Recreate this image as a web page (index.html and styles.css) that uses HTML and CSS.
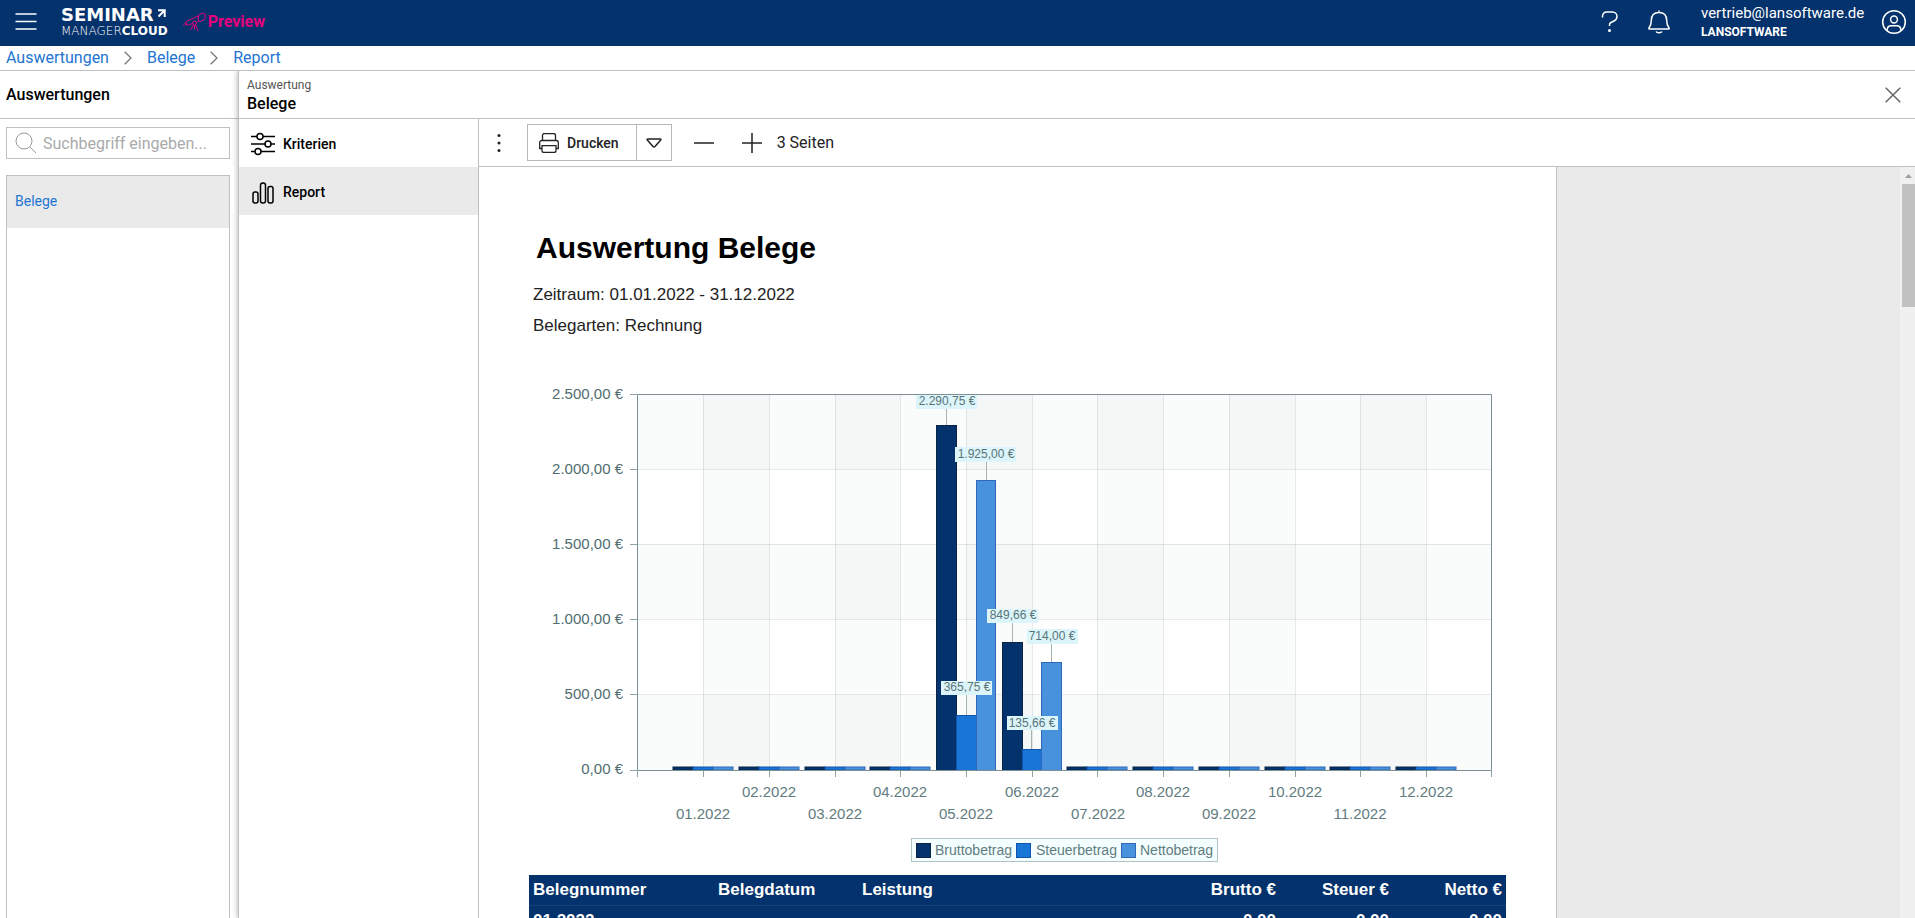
FILE: index.html
```html
<!DOCTYPE html>
<html lang="de">
<head>
<meta charset="utf-8">
<title>Auswertung Belege</title>
<link rel="stylesheet" href="styles.css">
</head>
<body>
<header class="topbar">
  <button class="icon-btn menu" aria-label="Menü"><svg width="22" height="20" viewBox="0 0 22 20"><path d="M0.500 2h21M0.500 9.500h21M0.500 17h21"/></svg></button>
  <div class="logo">
    <div class="logo-top">SEMINAR<svg width="9" height="9" viewBox="0 0 9 9"><path d="M1 1.300h6.700V8M7 2L1.500 7.500"/></svg></div>
    <div class="logo-bottom"><span>MANAGER</span><b>CLOUD</b></div>
  </div>
  <div class="preview">
    <svg width="23" height="20" viewBox="0 0 23 20"><path d="M15.500 3l4.500-2 1.700.6.500 4.600-1 1.600-4.400 1.800-1.600-1.200zM15.200 4L3.800 9.200l-.8 1.500 1.200 2.300 1.500.2 4-1.800M13.500 10.200l2.300-1.200M3 10.500l-1.200.8.700 1.500 1.500-.3M.5 12.500l.6 1.200M9.500 11.200a2 2 0 1 1 4 0 2 2 0 0 1-4 0M10.500 13l-3.200 5.200M12.500 13l2.500 6M11.500 13.200v4.300"/></svg>
    <span>Preview</span>
  </div>
  <div class="top-actions">
    <button class="icon-btn" aria-label="Hilfe"><svg width="18" height="24" viewBox="0 0 18 24"><path d="M1.500 7.500V6a4 4 0 0 1 4-4h6a4.500 4.500 0 0 1 4.500 4.500c0 2.500-1.300 3.800-3.500 4.800L10 12.500a2.600 2.600 0 0 0-1.500 2.500v1"/><circle class="dot" cx="8.500" cy="20.500" r="1.500"/></svg></button>
    <button class="icon-btn bell" aria-label="Benachrichtigungen"><svg width="22" height="24" viewBox="0 0 22 24"><path d="M11 .500v2M1.500 19h19c.8 0 .8-.8.400-1.300-1.700-2-2.200-3.600-2.200-7.200 0-5-3-8-7.700-8s-7.700 3-7.700 8c0 3.600-.5 5.200-2.200 7.200-.4.500-.4 1.300.4 1.300zM8 21.500c.8 1.600 5.200 1.600 6 0"/></svg></button>
    <div class="account"><span>vertrieb@lansoftware.de</span><b>LANSOFTWARE</b></div>
    <button class="icon-btn" aria-label="Profil"><svg width="26" height="26" viewBox="0 0 26 26"><circle cx="13" cy="13" r="11.300"/><circle cx="13" cy="10.500" r="3.400"/><path d="M6 21.500c.2-3.300 1.600-4.700 4.200-4.700h5.600c2.600 0 4 1.400 4.200 4.700"/></svg></button>
  </div>
</header>

<nav class="crumbs" aria-label="Brotkrumen">
  <a href="#">Auswertungen</a>
  <svg width="8" height="14" viewBox="0 0 8 14"><path d="M.7.700L7 7 .7 13.300"/></svg>
  <a href="#">Belege</a>
  <svg width="8" height="14" viewBox="0 0 8 14"><path d="M.7.700L7 7 .7 13.300"/></svg>
  <a href="#">Report</a>
</nav>

<main class="workspace">
  <aside class="sidebar">
    <h1 class="side-title">Auswertungen</h1>
    <div class="side-body">
      <label class="search">
        <svg width="22" height="22" viewBox="0 0 22 22"><circle cx="9" cy="9" r="8"/><path d="M15 15l6 6"/></svg>
        <input type="text" placeholder="Suchbegriff eingeben..." aria-label="Suchbegriff">
      </label>
      <div class="side-list"><a class="side-item" href="#">Belege</a></div>
    </div>
  </aside>

  <section class="detail">
    <div class="detail-head">
      <div><div class="kicker">Auswertung</div><h2>Belege</h2></div>
      <button class="icon-btn close" aria-label="Schließen"><svg width="16" height="16" viewBox="0 0 16 16"><path d="M.7.700l14.600 14.600M15.300.700L.7 15.300"/></svg></button>
    </div>
    <div class="detail-body">
      <nav class="tabs">
        <a class="tab" href="#"><svg width="24" height="24" viewBox="0 0 24 24"><path d="M0 4.500h6M12 4.500h12M0 12h14M20 12h4M0 19.500h4M10 19.500h14"/><circle cx="9" cy="4.500" r="3"/><circle cx="17" cy="12" r="3"/><circle cx="7" cy="19.500" r="3"/></svg>Kriterien</a>
        <a class="tab active" href="#"><svg width="24" height="24" viewBox="0 0 24 24"><rect x="2" y="12" width="5" height="11" rx="2"/><rect x="9.500" y="3" width="5" height="20" rx="2.300"/><rect x="17" y="6.500" width="5" height="16.500" rx="2"/></svg>Report</a>
      </nav>
      <div class="viewer">
        <div class="toolbar">
          <button class="icon-btn more" aria-label="Mehr"><svg width="4" height="20" viewBox="0 0 4 20"><circle cx="2" cy="2.500" r="1.500"/><circle cx="2" cy="10" r="1.500"/><circle cx="2" cy="17.500" r="1.500"/></svg></button>
          <div class="split">
            <button class="print"><svg width="20" height="20" viewBox="0 0 20 20"><path d="M3.500 7V2.500a2 2 0 0 1 2-2h9a2 2 0 0 1 2 2V7M3 15.500H.7v-6a2 2 0 0 1 2-2h14.600a2 2 0 0 1 2 2v6H17M3 12.700h14v4.800a2 2 0 0 1-2 2H5a2 2 0 0 1-2-2zM5 7.500h10"/></svg>Drucken</button>
            <button class="drop" aria-label="Druckoptionen"><svg width="16" height="10" viewBox="0 0 16 10"><path d="M1.800 1h12.400c.7 0 .9.500.5 1L9 8.500c-.5.600-1.500.600-2 0L1.300 2c-.4-.5-.2-1 .5-1z"/></svg></button>
          </div>
          <button class="icon-btn zoom" aria-label="Verkleinern"><svg width="20" height="20" viewBox="0 0 20 20"><path d="M0 10h20"/></svg></button>
          <button class="icon-btn zoom" aria-label="Vergrößern"><svg width="20" height="20" viewBox="0 0 20 20"><path d="M0 10h20M10 0v20"/></svg></button>
          <span class="pages">3 Seiten</span>
        </div>
        <div class="canvas">
          <article class="sheet">
            <h3>Auswertung Belege</h3>
            <p>Zeitraum: 01.01.2022 - 31.12.2022</p>
            <p>Belegarten: Rechnung</p>
            <svg class="chart" viewBox="0 0 977 490" role="img" aria-label="Beträge je Monat">
              <defs>
                <g id="zero">
                  <rect x="-30" y="393" width="20" height="3" class="b1"/><rect x="-10" y="393" width="20" height="3" class="b2"/><rect x="10" y="393" width="20" height="3" class="b3"/>
                </g>
              </defs>
              <g class="band">
                <path d="M109 20h854v75H109zM109 170h854v75H109zM109 321h854v75H109z"/>
                <path d="M174 20h66v376h-66zM306 20h65v376h-65zM437 20h66v376h-66zM568 20h66v376h-66zM700 20h66v376h-66zM831 20h66v376h-66z"/>
              </g>
              <path class="grid" d="M109 95.500h854M109 170.500h854M109 245.500h854M109 320.500h854M174.500 20v376M240.500 20v376M306.500 20v376M371.500 20v376M437.500 20v376M503.500 20v376M568.500 20v376M634.500 20v376M700.500 20v376M766.500 20v376M831.500 20v376M897.500 20v376"/>
              <path class="tick" d="M101 20.500h7M101 95.500h7M101 170.500h7M101 245.500h7M101 320.500h7M101 396.500h7M108.500 397v6M174.500 397v6M240.500 397v6M306.500 397v6M371.500 397v6M437.500 397v6M503.500 397v6M568.500 397v6M634.500 397v6M700.500 397v6M766.500 397v6M831.500 397v6M897.500 397v6M962.500 397v6"/>
              <use href="#zero" x="174"/><use href="#zero" x="240"/><use href="#zero" x="306"/><use href="#zero" x="371"/><use href="#zero" x="568"/><use href="#zero" x="634"/><use href="#zero" x="700"/><use href="#zero" x="766"/><use href="#zero" x="831"/><use href="#zero" x="897"/>
              <g>
                <rect class="b1" x="407.500" y="51.500" width="20" height="345"/><rect class="b2" x="427.500" y="341.500" width="20" height="55"/><rect class="b3" x="447.500" y="106.500" width="19" height="290"/>
                <rect class="b1" x="473.500" y="268.500" width="20" height="128"/><rect class="b2" x="493.500" y="375.500" width="20" height="21"/><rect class="b3" x="512.500" y="288.500" width="20" height="108"/>
              </g>
              <path class="frame" d="M108.500 20.500h854v376h-854z"/>
              <path class="lead" d="M417.500 35v16M457.500 87v19M437.500 321v20M483.500 249v19M502.500 356v19M522.500 270v18"/>
              <g class="tag-bg">
                <rect x="387" y="21" width="61" height="14"/><rect x="426" y="73" width="61" height="15"/><rect x="412" y="307" width="51" height="14"/><rect x="458" y="235" width="51" height="14"/><rect x="478" y="342" width="51" height="14"/><rect x="498" y="255" width="51" height="15"/>
              </g>
              <g class="tag">
                <text x="418" y="31">2.290,75 €</text><text x="457" y="84">1.925,00 €</text><text x="438" y="317">365,75 €</text><text x="484" y="245">849,66 €</text><text x="503" y="353">135,66 €</text><text x="523" y="266">714,00 €</text>
              </g>
              <g class="ylab">
                <text x="94" y="25">2.500,00 €</text><text x="94" y="100">2.000,00 €</text><text x="94" y="175">1.500,00 €</text><text x="94" y="250">1.000,00 €</text><text x="94" y="325">500,00 €</text><text x="94" y="400">0,00 €</text>
              </g>
              <g class="xlab">
                <text x="174" y="445">01.2022</text><text x="240" y="423">02.2022</text><text x="306" y="445">03.2022</text><text x="371" y="423">04.2022</text><text x="437" y="445">05.2022</text><text x="503" y="423">06.2022</text><text x="569" y="445">07.2022</text><text x="634" y="423">08.2022</text><text x="700" y="445">09.2022</text><text x="766" y="423">10.2022</text><text x="831" y="445">11.2022</text><text x="897" y="423">12.2022</text>
              </g>
              <rect class="legend-box" x="382.500" y="464.500" width="306" height="23"/>
              <rect class="b1" x="387.500" y="469.500" width="14" height="14"/><rect class="b2" x="487.500" y="469.500" width="14" height="14"/><rect class="b3" x="592.500" y="469.500" width="14" height="14"/>
              <g class="legend"><text x="406" y="481">Bruttobetrag</text><text x="507" y="481">Steuerbetrag</text><text x="611" y="481">Nettobetrag</text></g>
            </svg>
            <table class="docs">
              <colgroup><col class="c-num"><col class="c-date"><col><col class="c-sum"><col class="c-sum"><col class="c-sum"></colgroup>
              <thead><tr><th>Belegnummer</th><th>Belegdatum</th><th>Leistung</th><th class="num">Brutto €</th><th class="num">Steuer €</th><th class="num">Netto €</th></tr></thead>
              <tbody><tr><td colspan="3">01.2022</td><td class="num">0,00</td><td class="num">0,00</td><td class="num">0,00</td></tr></tbody>
            </table>
          </article>
          <div class="scrollbar"><svg width="7" height="4" viewBox="0 0 7 4"><path d="M0 4L3.500 0 7 4z"/></svg><div class="thumb"></div></div>
        </div>
      </div>
    </div>
  </section>
</main>
</body>
</html>
```
FILE: styles.css
```css
* { box-sizing: border-box; }
html, body { height: 100%; }
body {
  margin: 0;
  display: flex;
  flex-direction: column;
  overflow: hidden;
  font-family: Roboto, "Liberation Sans", sans-serif;
  font-size: 16px;
  color: #000;
  background: #fff;
}
h1, h2, h3, p { margin: 0; }
a { text-decoration: none; }
svg { display: block; flex: none; fill: none; stroke: currentColor; }
.icon-btn { display: flex; padding: 0; border: 0; background: none; color: inherit; }

.topbar {
  flex: none;
  height: 46px;
  display: flex;
  align-items: center;
  padding: 0 8px 2px 15px;
  background: #04326c;
  color: #fff;
}
.topbar svg { stroke-width: 1.500; }
.logo { margin-left: 24px; font-family: "DejaVu Sans", sans-serif; }
.logo-top { display: flex; align-items: flex-start; gap: 3px; height: 16px; font-size: 18px; line-height: 16px; font-weight: 700; }
.logo-top svg { stroke-width: 2; margin-top: 2px; }
.logo-bottom { margin-top: 2px; font-size: 12px; line-height: 12px; }
.logo-bottom span { font-weight: 200; }
.preview { display: flex; align-items: center; gap: 2px; margin-left: 15px; color: #e6007e; font-weight: 700; line-height: 20px; }
.preview svg { stroke-width: 1; }
.top-actions { display: flex; align-items: center; margin-left: auto; }
.top-actions .dot { fill: #fff; stroke: none; }
.bell { margin: 0 31px 0 29px; }
.account { min-width: 169px; display: flex; flex-direction: column; margin-right: 11px; font-size: 15px; line-height: 20px; }
.account b { font-size: 12px; line-height: 18px; }

.crumbs {
  flex: none;
  height: 25px;
  display: flex;
  align-items: center;
  gap: 15px;
  padding: 0 6px 1px;
  border-bottom: 1px solid #c0c0c0;
  color: #777;
}
.crumbs a { color: #2275d3; line-height: 22px; }
.crumbs svg { stroke-width: 1.300; }

.workspace { flex: 1; min-height: 0; display: flex; }
.sidebar { width: 238px; flex: none; display: flex; flex-direction: column; }
.side-title {
  height: 48px;
  padding: 0 6px;
  border-bottom: 1px solid #c0c0c0;
  font-size: 16px;
  line-height: 47px;
  font-weight: 500;
}
.side-body { flex: 1; display: flex; flex-direction: column; gap: 16px; padding: 8px 8px 0 6px; }
.search { height: 32px; display: flex; align-items: center; gap: 6px; padding: 0 8px; border: 1px solid #c0c0c0; color: #999; }
.search input { min-width: 0; flex: 1; padding: 0; border: 0; outline: 0; font: inherit; }
.search input::placeholder { color: #aaa; }
.side-list { flex: 1; border: 1px solid #c0c0c0; border-bottom: 0; }
.side-item { display: block; height: 52px; padding: 0 8px; background: #eaeaea; color: #2275d3; font-size: 14px; line-height: 50px; }

.detail {
  flex: 1;
  min-width: 0;
  display: flex;
  flex-direction: column;
  border-left: 1px solid #c0c0c0;
  box-shadow: -1px 0 5px rgba(0, 0, 0, 0.25);
  clip-path: inset(0 0 0 -8px);
}
.detail-head { flex: none; height: 48px; display: flex; align-items: center; justify-content: space-between; padding: 0 14px 0 8px; border-bottom: 1px solid #c0c0c0; }
.kicker { font-size: 12px; line-height: 18px; color: #555; }
.detail-head h2 { font-size: 16px; line-height: 20px; font-weight: 500; }
.close { color: #666; }
.close svg { stroke-width: 1.500; }
.detail-body { flex: 1; min-height: 0; display: flex; }

.tabs { width: 240px; flex: none; border-right: 1px solid #c0c0c0; }
.tab { height: 48px; display: flex; align-items: center; gap: 8px; padding: 2px 12px 0; color: #000; font-size: 14px; font-weight: 500; }
.tab svg { stroke-width: 1.500; }
.tab.active { background: #eaeaea; }

.viewer { flex: 1; min-width: 0; display: flex; flex-direction: column; }
.toolbar { flex: none; height: 48px; display: flex; align-items: center; padding: 0 18px; border-bottom: 1px solid #c0c0c0; color: #222; }
.more svg { fill: #222; stroke: none; }
.split { display: flex; height: 37px; margin: 0 22px 0 26px; border: 1px solid #b8b8b8; }
.split button { display: flex; align-items: center; border: 0; background: none; color: #222; font-family: inherit; font-size: 14px; font-weight: 500; }
.print { gap: 8px; padding: 0 17px 0 11px; }
.print svg { stroke-width: 1.300; }
.split .drop { padding: 0 9px; border-left: 1px solid #b8b8b8; }
.drop svg { stroke-width: 1.500; }
.zoom { margin-right: 28px; }
.zoom svg { stroke-width: 1.500; }
.zoom + .zoom { margin-right: 15px; }
.pages { line-height: 20px; }

.canvas { flex: 1; min-height: 0; display: flex; justify-content: space-between; overflow: hidden; background: #eaeaea; }
.sheet {
  width: 75%;
  padding: 63px 50px 0;
  background: #fff;
  box-shadow: 1px 0 0 #c0c0c0;
  font-family: "Liberation Sans", sans-serif;
  overflow: hidden;
}
.sheet h3 { margin: 0 0 13px 7px; font-size: 30px; line-height: 36px; }
.sheet p { margin-left: 4px; font-size: 17px; line-height: 31px; color: #222; }

.chart { width: 100%; height: auto; margin: 33px 0 11px; }
.chart text { stroke: none; fill: #5f7c80; font-size: 15px; }
.band { fill: #2c5c48; fill-opacity: 0.025; stroke: none; }
.grid { stroke: #2f4f4f; stroke-opacity: 0.12; }
.tick { stroke: #90a3a8; }
.frame { stroke: #7b9095; }
.lead { stroke: #a5b3b5; }
.b1 { fill: #04326c; stroke: #0b2445; }
.b2 { fill: #1976d6; stroke: #1253ab; }
.b3 { fill: #4891dc; stroke: #2f68ba; }
.tag-bg { fill: #dcf5fa; stroke: none; }
.chart .tag text { font-size: 12px; fill: #5a7478; text-anchor: middle; }
.chart .ylab text { text-anchor: end; fill: #4f6c70; }
.chart .xlab text { text-anchor: middle; }
.legend-box { fill: #f4fefe; stroke: #b0c2c4; }
.chart .legend text { font-size: 14px; }

.docs { width: 100%; table-layout: fixed; border-collapse: collapse; background: #04326c; color: #fff; font-size: 17px; font-weight: 700; line-height: 30px; }
.docs th, .docs td { padding: 0 4px; border: 1px solid #163f76; border-width: 0 0 1px; text-align: left; }
.docs .num { text-align: right; }
.c-num { width: 185px; }
.c-date { width: 144px; }
.c-sum { width: 113px; }

.scrollbar { width: 15px; flex: none; display: flex; flex-direction: column; align-items: flex-end; background: #f0f0f0; }
.scrollbar svg { margin: 7px 3px 6px 0; fill: #a0a0a0; stroke: none; }
.thumb { width: 13px; height: 123px; background: #c1c1c1; }
```
